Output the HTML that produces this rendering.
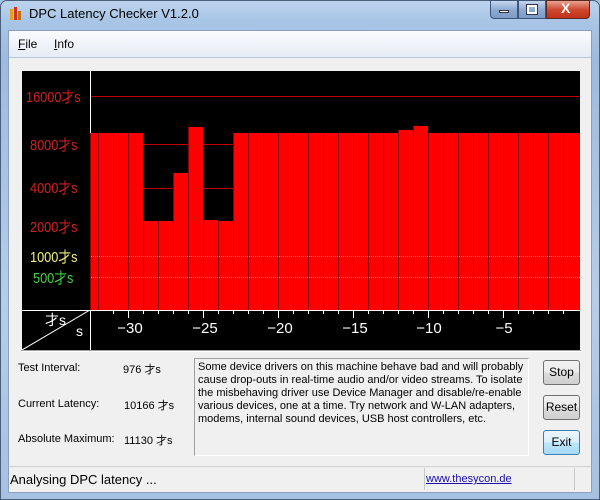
<!DOCTYPE html>
<html><head><meta charset="utf-8"><style>
*{margin:0;padding:0;box-sizing:border-box}
body{width:600px;height:500px;overflow:hidden;position:relative;font-family:"Liberation Sans","Noto Sans CJK JP",sans-serif;font-size:12px;color:#000;background:#a8c4e4}
.a{position:absolute}
#frame{left:0;top:0;width:600px;height:500px;border-radius:7px 7px 0 0;background:linear-gradient(180deg,#bcd4ee 0,#a9c5e6 20px,#9dbbe0 60px,#b4cde9 300px,#a6c1e2 500px);border:1px solid #4a5f7a}
#client{left:8px;top:30px;width:584px;height:463px;background:#f0f0f0;border:1px solid #8aa0bd}
#menu{left:9px;top:31px;width:582px;height:27px;background:linear-gradient(#fafbfd,#e6ecf5);border-bottom:1px solid #b9c7d9}
.lbl{font-size:12px;white-space:nowrap}
.chart{left:22px;top:71px;width:558px;height:279px;background:#000}
.b{position:absolute;background:#f00;border-left:1px solid #8b0000;bottom:0}
.yl{position:absolute;font-size:15px;transform:scaleX(.85);transform-origin:left;white-space:nowrap}
.xl{position:absolute;color:#fff;font-size:15px;top:320px;width:40px;text-align:center}
.tk{position:absolute;background:#fff;width:1px;top:310px}
.btn{position:absolute;left:543px;width:37px;height:25px;border:1px solid #707070;border-radius:3px;background:linear-gradient(#f2f2f2 0,#ebebeb 50%,#dddddd 51%,#cfcfcf);text-align:center;line-height:23px;font-size:12px}
</style></head><body>
<div id="frame" class="a"></div>
<!-- title -->
<div class="a" style="left:10px;top:9px;width:3px;height:11px;background:#e0a020"></div>
<div class="a" style="left:14px;top:7px;width:3px;height:13px;background:#d03020"></div>
<div class="a" style="left:18px;top:11px;width:3px;height:9px;background:#c07010"></div>
<div class="a lbl" style="left:29px;top:6px;font-size:13px;color:#000">DPC Latency Checker V1.2.0</div>
<div class="a" style="left:490px;top:0;width:28px;height:19px;border:1px solid #3d5677;border-radius:0 0 0 4px;background:linear-gradient(#c5d7ee,#8fabd3 50%,#7c9ac7)"></div>
<div class="a" style="left:499px;top:10px;width:10px;height:3px;background:#fff;border:1px solid #334"></div>
<div class="a" style="left:518px;top:0;width:28px;height:19px;border:1px solid #3d5677;background:linear-gradient(#c5d7ee,#8fabd3 50%,#7c9ac7)"></div>
<div class="a" style="left:527px;top:5px;width:10px;height:9px;border:2px solid #fff;outline:1px solid #334"></div>
<div class="a" style="left:546px;top:0;width:44px;height:19px;border:1px solid #5a2a20;border-radius:0 0 4px 0;background:linear-gradient(#e8a393,#cf4a30 50%,#c03018)"></div>
<div class="a" style="left:561px;top:0px;color:#fff;font-weight:bold;font-size:14px">X</div>
<div id="client" class="a"></div>
<div id="menu" class="a"></div>
<div class="a lbl" style="left:18px;top:37px"><u>F</u>ile</div>
<div class="a lbl" style="left:54px;top:37px"><u>I</u>nfo</div>
<!-- chart -->
<div class="a chart"></div>
<div class="a" style="left:90px;top:71px;width:1px;height:279px;background:#fff"></div>
<div class="a" style="left:91px;top:96px;width:489px;height:1px;background:#c00000"></div>
<div class="a" style="left:91px;top:144px;width:489px;height:1px;background:#c00000"></div>
<div class="a" style="left:91px;top:188px;width:489px;height:1px;background:#c00000"></div>
<div class="a" style="left:91px;top:72px;width:489px;height:238px">
<div class="b" style="left:-1px;width:8px;height:177px"></div>
<div class="b" style="left:7px;width:15px;height:177px"></div>
<div class="b" style="left:22px;width:15px;height:177px"></div>
<div class="b" style="left:37px;width:15px;height:177px"></div>
<div class="b" style="left:52px;width:15px;height:89px"></div>
<div class="b" style="left:67px;width:15px;height:89px"></div>
<div class="b" style="left:82px;width:15px;height:137px"></div>
<div class="b" style="left:97px;width:15px;height:183px"></div>
<div class="b" style="left:112px;width:15px;height:90px"></div>
<div class="b" style="left:127px;width:15px;height:89px"></div>
<div class="b" style="left:142px;width:15px;height:177px"></div>
<div class="b" style="left:157px;width:15px;height:177px"></div>
<div class="b" style="left:172px;width:15px;height:177px"></div>
<div class="b" style="left:187px;width:15px;height:177px"></div>
<div class="b" style="left:202px;width:15px;height:177px"></div>
<div class="b" style="left:217px;width:15px;height:177px"></div>
<div class="b" style="left:232px;width:15px;height:177px"></div>
<div class="b" style="left:247px;width:15px;height:177px"></div>
<div class="b" style="left:262px;width:15px;height:177px"></div>
<div class="b" style="left:277px;width:15px;height:177px"></div>
<div class="b" style="left:292px;width:15px;height:177px"></div>
<div class="b" style="left:307px;width:15px;height:180px"></div>
<div class="b" style="left:322px;width:15px;height:184px"></div>
<div class="b" style="left:337px;width:15px;height:177px"></div>
<div class="b" style="left:352px;width:15px;height:177px"></div>
<div class="b" style="left:367px;width:15px;height:177px"></div>
<div class="b" style="left:382px;width:15px;height:177px"></div>
<div class="b" style="left:397px;width:15px;height:177px"></div>
<div class="b" style="left:412px;width:15px;height:177px"></div>
<div class="b" style="left:427px;width:15px;height:177px"></div>
<div class="b" style="left:442px;width:15px;height:177px"></div>
<div class="b" style="left:457px;width:15px;height:177px"></div>
<div class="b" style="left:472px;width:17px;height:177px"></div>
</div>
<div class="a" style="left:91px;top:256px;width:489px;height:0;border-top:1px dotted rgba(255,255,255,.6)"></div>
<div class="a" style="left:91px;top:277px;width:489px;height:0;border-top:1px dotted rgba(255,255,255,.6)"></div>
<div class="yl" style="left:26px;top:86px;color:#d02020">16000才s</div>
<div class="yl" style="left:30px;top:134px;color:#d02020">8000才s</div>
<div class="yl" style="left:30px;top:177px;color:#d02020">4000才s</div>
<div class="yl" style="left:30px;top:216px;color:#d02020">2000才s</div>
<div class="yl" style="left:30px;top:246px;color:#f0f080">1000才s</div>
<div class="yl" style="left:33px;top:267px;color:#40d040">500才s</div>
<div class="a" style="left:22px;top:310px;width:558px;height:1px;background:#fff"></div>
<svg class="a" style="left:22px;top:310px" width="70" height="40"><line x1="0" y1="40" x2="68" y2="0" stroke="#fff" stroke-width="1"/></svg>
<div class="a" style="left:45px;top:310px;color:#fff;font-size:14px">才s</div>
<div class="a" style="left:76px;top:323px;color:#fff;font-size:14px">s</div>
<div class="tk" style="left:113px;height:4px"></div><div class="tk" style="left:128px;height:8px"></div>
<div class="tk" style="left:143px;height:4px"></div><div class="tk" style="left:158px;height:4px"></div><div class="tk" style="left:173px;height:4px"></div><div class="tk" style="left:188px;height:4px"></div><div class="tk" style="left:203px;height:8px"></div>
<div class="tk" style="left:218px;height:4px"></div><div class="tk" style="left:233px;height:4px"></div><div class="tk" style="left:248px;height:4px"></div><div class="tk" style="left:263px;height:4px"></div><div class="tk" style="left:278px;height:8px"></div>
<div class="tk" style="left:293px;height:4px"></div><div class="tk" style="left:308px;height:4px"></div><div class="tk" style="left:323px;height:4px"></div><div class="tk" style="left:338px;height:4px"></div><div class="tk" style="left:353px;height:8px"></div>
<div class="tk" style="left:368px;height:4px"></div><div class="tk" style="left:383px;height:4px"></div><div class="tk" style="left:398px;height:4px"></div><div class="tk" style="left:413px;height:4px"></div><div class="tk" style="left:428px;height:8px"></div>
<div class="tk" style="left:443px;height:4px"></div><div class="tk" style="left:458px;height:4px"></div><div class="tk" style="left:473px;height:4px"></div><div class="tk" style="left:488px;height:4px"></div><div class="tk" style="left:503px;height:8px"></div>
<div class="tk" style="left:518px;height:4px"></div><div class="tk" style="left:533px;height:4px"></div><div class="tk" style="left:548px;height:4px"></div><div class="tk" style="left:563px;height:4px"></div>
<div class="xl" style="left:110px">−30</div>
<div class="xl" style="left:185px">−25</div>
<div class="xl" style="left:260px">−20</div>
<div class="xl" style="left:335px">−15</div>
<div class="xl" style="left:409px">−10</div>
<div class="xl" style="left:484px">−5</div>
<div class="a" style="left:21px;top:350px;width:560px;height:2px;border-top:1px solid #a0a0a0;border-bottom:1px solid #fff"></div>
<!-- info -->
<div class="a lbl" style="left:18px;top:362px;font-size:11px">Test Interval:</div>
<div class="a lbl" style="left:123px;top:361px;font-size:11px">976 才s</div>
<div class="a lbl" style="left:18px;top:398px;font-size:11px">Current Latency:</div>
<div class="a lbl" style="left:124px;top:397px;font-size:11px">10166 才s</div>
<div class="a lbl" style="left:18px;top:433px;font-size:11px">Absolute Maximum:</div>
<div class="a lbl" style="left:124px;top:432px;font-size:11px">11130 才s</div>
<div class="a" style="left:194px;top:358px;width:335px;height:98px;border:1px solid #a0a0a0;border-right-color:#fff;border-bottom-color:#fff;background:#f0f0f0;padding:2px 3px;font-size:11px;line-height:13px">Some device drivers on this machine behave bad and will probably cause drop-outs in real-time audio and/or video streams. To isolate the misbehaving driver use Device Manager and disable/re-enable various devices, one at a time. Try network and W-LAN adapters, modems, internal sound devices, USB host controllers, etc.</div>
<div class="btn" style="top:360px">Stop</div>
<div class="btn" style="top:395px">Reset</div>
<div class="btn" style="top:430px;border-color:#3c7fb1;background:linear-gradient(#eaf6fd,#d9f0fc 50%,#bee6fd 51%,#a7d9f5)">Exit</div>
<!-- status -->
<div class="a" style="left:9px;top:466px;width:582px;height:26px;background:#f0f0f0;border-top:1px solid #d0d0d0"></div>
<div class="a" style="left:424px;top:468px;width:1px;height:22px;background:#c8c8c8"></div>
<div class="a" style="left:574px;top:468px;width:1px;height:22px;background:#c8c8c8"></div>
<div class="a lbl" style="left:10px;top:472px;font-size:13px">Analysing DPC latency ...</div>
<div class="a lbl" style="left:426px;top:473px;font-size:11px;color:#1a0dab;text-decoration:underline">www.thesycon.de</div>
</body></html>
